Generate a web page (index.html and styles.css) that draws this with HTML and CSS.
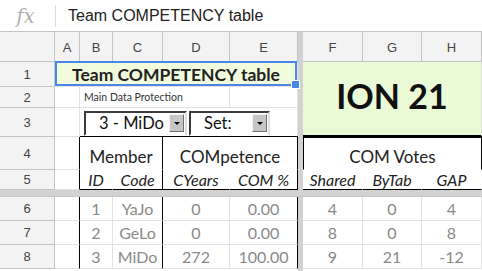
FILE: index.html
```html
<!DOCTYPE html>
<html lang="en">
<head>
    <meta charset="UTF-8">
    <title>Team COMPETENCY table</title>
    <link rel="stylesheet" href="styles.css">
</head>
<body>

<div class="formula-bar">
    <span class="fx">fx</span>
    <span class="fx-sep"></span>
    <span class="fx-text">Team COMPETENCY table</span>
</div>

<div class="sheet">
    <div class="freeze-col"></div>
    <div class="freeze-row"></div>

    <!-- column headers -->
    <div class="hd corner"></div>
    <div class="hd">A</div>
    <div class="hd">B</div>
    <div class="hd">C</div>
    <div class="hd">D</div>
    <div class="hd">E</div>
    <div class="hd">F</div>
    <div class="hd">G</div>
    <div class="hd">H</div>

    <!-- row 1 -->
    <div class="rh">1</div>
    <div class="c title span5">Team COMPETENCY table</div>
    <div class="c ion span3 rows3">ION 21</div>

    <!-- row 2 -->
    <div class="rh">2</div>
    <div class="c"></div>
    <div class="c note span3">Main Data Protection</div>
    <div class="c"></div>

    <!-- row 3 -->
    <div class="rh">3</div>
    <div class="c"></div>
    <div class="c combos span4">
        <div class="combo wide"><span>3 - MiDo</span><i class="drop"></i></div>
        <div class="combo narrow"><span>Set:</span><i class="drop"></i></div>
    </div>

    <!-- row 4 -->
    <div class="rh">4</div>
    <div class="c edge"></div>
    <div class="c box span2 close">Member</div>
    <div class="c box span2 close">COMpetence</div>
    <div class="c box span3 top2">COM Votes</div>

    <!-- row 5 -->
    <div class="rh">5</div>
    <div class="c edge"></div>
    <div class="c sub">ID</div>
    <div class="c sub close">Code</div>
    <div class="c sub">CYears</div>
    <div class="c sub close">COM %</div>
    <div class="c sub">Shared</div>
    <div class="c sub">ByTab</div>
    <div class="c sub">GAP</div>

    <!-- rows 6-8 -->
    <div class="rh">6</div>
    <div class="c edge"></div>
    <div class="c val">1</div>
    <div class="c val close">YaJo</div>
    <div class="c val">0</div>
    <div class="c val close">0.00</div>
    <div class="c val">4</div>
    <div class="c val">0</div>
    <div class="c val">4</div>

    <div class="rh">7</div>
    <div class="c edge"></div>
    <div class="c val">2</div>
    <div class="c val close">GeLo</div>
    <div class="c val">0</div>
    <div class="c val close">0.00</div>
    <div class="c val">8</div>
    <div class="c val">0</div>
    <div class="c val">8</div>

    <div class="rh">8</div>
    <div class="c edge"></div>
    <div class="c val">3</div>
    <div class="c val close">MiDo</div>
    <div class="c val">272</div>
    <div class="c val close">100.00</div>
    <div class="c val">9</div>
    <div class="c val">21</div>
    <div class="c val">-12</div>
</div>

</body>
</html>
```

FILE: styles.css
```css
:root { --grid: #e2e2e2; --head: #f3f3f3; --headline: #c4c4c4; --bar: #d2d2d2; --ink: #222; }
* { box-sizing: border-box; }
body { margin: 0; background: #fff; font-family: Lato, sans-serif; color: var(--ink); overflow: hidden; }

/* formula bar */
.formula-bar { height: 32px; display: flex; align-items: center; border-bottom: 1px solid var(--headline); }
.fx { width: 55px; text-align: center; font-family: "DejaVu Serif", serif; font-style: italic; font-size: 20px; color: #b0b0b0; padding-right: 4px; }
.fx-sep { width: 1px; height: 22px; background: #dcdcdc; }
.fx-text { margin-left: 12px; font-family: "Liberation Sans", sans-serif; font-size: 16px; color: #222; }

/* sheet grid */
.sheet { display: grid; position: relative;
    grid-template-columns: 55px 25px 33px 50px 67px 68px 5px 60px 59px 1fr;
    grid-template-rows: 30px 25px 21px 29px 33px 20px 7px 24px 24px 24px 10px; }
.freeze-col { grid-column: 7; grid-row: 1 / 12; background: var(--bar); }
.freeze-row { grid-column: 1 / -1; grid-row: 7; background: var(--bar); border-bottom: 1px solid #c6c6c6; }

.hd, .rh { background: var(--head); border-right: 1px solid var(--headline); border-bottom: 1px solid var(--headline);
    display: flex; align-items: center; justify-content: center;
    font-family: "Liberation Sans", sans-serif; font-size: 13px; color: #444; }
.hd { padding-top: 2px; }

.c { border-right: 1px solid var(--grid); border-bottom: 1px solid var(--grid); display: flex; align-items: center; justify-content: center; white-space: nowrap; }
.span2 { grid-column: span 2; }
.span3 { grid-column: span 3; }
.span4 { grid-column: span 4; }
.span5 { grid-column: span 5; }
.rows3 { grid-row: span 3; }

/* row 1 */
.title { position: relative; background: #f1fcdd; font-weight: 700; font-size: 17.5px; padding-top: 1px; }
.title::after { content: ""; position: absolute; left: 0; top: -1px; right: 0; bottom: 0; border: 2px solid #4a86e8; }
.title::before { content: ""; position: absolute; right: -3px; bottom: -3px; width: 7px; height: 7px; background: #4a86e8; border: 1px solid #fff; z-index: 1; }
.ion { background: #ebfad6; font-weight: 700; font-size: 34px; color: #111; border-bottom: 2px solid #000; padding-bottom: 6px; }

/* row 2 */
.note { justify-content: flex-start; padding-left: 4px; font-size: 10.5px; color: #333; }

/* row 3 controls */
.combos { justify-content: flex-start; align-items: flex-end; gap: 2px; padding-left: 4px; border-bottom-color: #000; }
.combo { height: 25px; display: flex; align-items: center; justify-content: space-between;
    border: 2px solid; border-color: #3c3c3c #e0e0e0 transparent #3c3c3c; background: #fff; font-size: 16.5px; color: #111; padding: 0 1px 2px 13px; }
.combo.wide { width: 103px; }
.combo.narrow { width: 81px; }
.drop { width: 15px; height: 18px; background: #c6c6c6; border: 1px solid; border-color: #f4f4f4 #6e6e6e #6e6e6e #f4f4f4; position: relative; margin-top: 1px; }
.drop::after { content: ""; position: absolute; left: 4px; top: 7px; border-left: 3px solid transparent; border-right: 3px solid transparent; border-top: 3px solid #000; }

/* boxed header + body */
.edge { border-right-color: #000; }
.box { font-size: 17px; color: #222; border-top: 1px solid #000; border-bottom-color: #fff; border-right-color: #000; padding-top: 6px; margin-top: -1px; }
.top2 { border-top-width: 2px; border-left: 1px solid #000; }
.sub { font-style: italic; font-size: 16px; color: #222; border-bottom-color: #000; border-right-color: #fff; padding-bottom: 1px; }
.sub.close { border-right-color: #000; }
.val { font-size: 16px; color: #8a8a8a; }
.val.close { border-right-color: #000; }
```
